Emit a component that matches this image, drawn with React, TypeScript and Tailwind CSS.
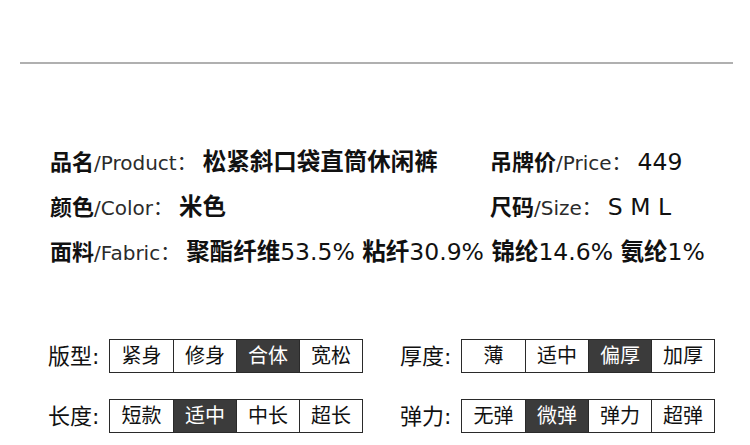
import React from "react";

const font = {
  fontFamily: '"DejaVu Sans", "Noto Sans CJK SC", sans-serif',
};

type Spec = { label: string; options: string[]; active: number };

const left: Spec[] = [
  { label: "版型", options: ["紧身", "修身", "合体", "宽松"], active: 2 },
  { label: "长度", options: ["短款", "适中", "中长", "超长"], active: 1 },
];

const right: Spec[] = [
  { label: "厚度", options: ["薄", "适中", "偏厚", "加厚"], active: 2 },
  { label: "弹力", options: ["无弹", "微弹", "弹力", "超弹"], active: 1 },
];

// CJK runs bold, latin runs regular
const Value = ({ text }: { text: string }) => (
  <span className="text-[23.5px] text-[#111] ml-[6px]">
    {text.split(/([\u4e00-\u9fff]+)/).filter(Boolean).map((part, i) =>
      /[\u4e00-\u9fff]/.test(part) ? (
        <span key={i} className="font-bold">{part}</span>
      ) : (
        <span key={i}>{part}</span>
      )
    )}
  </span>
);

const Field = ({ zh, en, value }: { zh: string; en: string; value: string }) => (
  <div className="flex items-center h-[45px] whitespace-nowrap">
    <span className="text-[22px] font-bold text-[#111]">{zh}</span>
    <span className="text-[20px] text-[#2b2b2b]">/{en}：</span>
    <Value text={value} />
  </div>
);

const SpecRow = ({ spec }: { spec: Spec }) => (
  <div className="flex items-center">
    <span className="text-[22px] text-[#111] w-[61px]">{spec.label}:</span>
    <div className="flex border-[1.5px] border-[#2a2a2a]">
      {spec.options.map((o, i) => (
        <div
          key={o + i}
          className={
            "w-[63px] h-[32px] flex items-center justify-center text-[20px] leading-none " +
            (i > 0 ? "border-l-[1px] border-[#2a2a2a] " : "") +
            (i === spec.active ? "bg-[#3b3b3b] text-white" : "bg-white text-[#111]")
          }
        >
          {o}
        </div>
      ))}
    </div>
  </div>
);

export default function App() {
  return (
    <div className="w-[750px] h-[445px] bg-white overflow-hidden" style={font}>
      <div className="pt-[62px] px-[20px]">
        <div className="w-[713px] h-[2px] bg-[#b0b0b0]" />
      </div>

      <div className="mt-[76px] pl-[50px]">
        <div className="grid grid-cols-[440px_auto]">
          <Field zh="品名" en="Product" value="松紧斜口袋直筒休闲裤" />
          <Field zh="吊牌价" en="Price" value="449" />
          <Field zh="颜色" en="Color" value="米色" />
          <Field zh="尺码" en="Size" value="S M L" />
        </div>
        <Field zh="面料" en="Fabric" value="聚酯纤维53.5% 粘纤30.9% 锦纶14.6% 氨纶1%" />
      </div>

      <div className="mt-[64px] pl-[48px] flex flex-col gap-[26px]">
        {left.map((l, i) => (
          <div key={l.label} className="flex">
            <div className="w-[352px]">
              <SpecRow spec={l} />
            </div>
            <SpecRow spec={right[i]} />
          </div>
        ))}
      </div>
    </div>
  );
}
